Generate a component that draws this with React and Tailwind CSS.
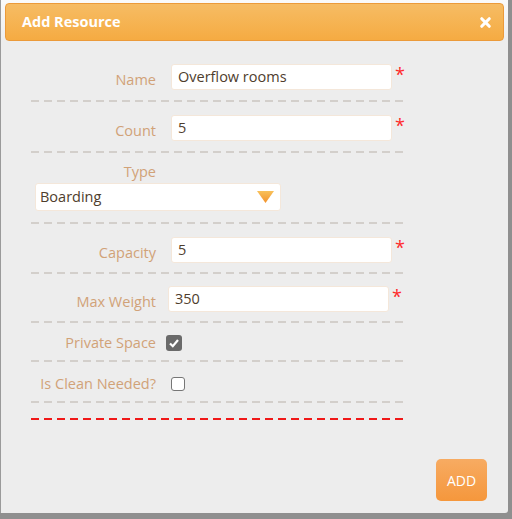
import { X } from 'lucide-react'

const font = { fontFamily: '"Open Sans", "Noto Sans", sans-serif' }

function Dash({ red }) {
    return (
        <div
            className={`h-[2px] w-full ${red
                ? 'bg-[repeating-linear-gradient(to_right,#f01818_0_8px,transparent_8px_13px)]'
                : 'bg-[repeating-linear-gradient(to_right,#d3cfcb_0_8px,transparent_8px_13px)]'
                }`}
        />
    )
}

function TextRow({ label, value, shift = false }) {
    return (
        <div className="flex items-start h-[26px]">
            <div className="w-[125px] text-right text-[14.5px] leading-[20px] pt-[6px] text-[#d1a278]">{label}</div>
            <div className={`flex items-start h-[26px] ${shift ? 'ml-[12px]' : 'ml-[15px]'}`}>
                <div className="w-[221px] h-[26px] bg-white border border-[#f4e7da] rounded-[3px] px-[6px] text-[14.5px] leading-[24px] text-[#4e3d2d]">
                    {value}
                </div>
                <div className="h-[26px] leading-none text-[18px] text-[#ff2a2a] ml-[3px] pt-[1px]">*</div>
            </div>
        </div>
    )
}

export default function App() {
    return (
        <div className="w-[512px] h-[519px] bg-[#8f8f8f] overflow-hidden" style={font}>
            <div className="w-[508px] h-[513px] bg-[#ededed] border-l border-[#9a9a9a] rounded-br-[3px] flex flex-col">
                {/* Header */}
                <div className="bg-[linear-gradient(to_bottom,#fafafa,#ededed)] pt-[3px] px-[4px]">
                    <div className="h-[38px] rounded-[4px] border border-[#eb9a3a] bg-[linear-gradient(to_bottom,#f6bc64,#f5ab42)] flex items-center justify-between pl-[16px] pr-[10px]">
                        <span className="text-white font-bold text-[14.5px]">Add Resource</span>
                        <X size={15} strokeWidth={5} className="text-white" />
                    </div>
                </div>

                {/* Form */}
                <div className="mx-[30px] w-[375px] flex flex-col pt-[23px]">
                    <TextRow label="Name" value="Overflow rooms" />
                    <div className="mt-[10px]"><Dash /></div>

                    <div className="mt-[13px]"><TextRow label="Count" value="5" /></div>
                    <div className="mt-[10px]"><Dash /></div>

                    <div className="mt-[9px] w-[125px] text-right text-[14.5px] leading-[20px] text-[#d1a278]">Type</div>
                    <div className="mt-[1px] ml-[4px] w-[246px] h-[28px] bg-white border border-[#f4e7da] rounded-[3px] pl-[4px] pr-[6px] flex items-center justify-between">
                        <span className="text-[14.5px] text-[#4e3d2d]">Boarding</span>
                        <svg width="17" height="12" viewBox="0 0 17 12">
                            <defs>
                                <linearGradient id="tri" x1="0" y1="0" x2="0" y2="1">
                                    <stop offset="0" stopColor="#f8c15a" />
                                    <stop offset="1" stopColor="#f2922c" />
                                </linearGradient>
                            </defs>
                            <polygon points="0,0 17,0 8.5,12" fill="url(#tri)" />
                        </svg>
                    </div>
                    <div className="mt-[11px]"><Dash /></div>

                    <div className="mt-[13px]"><TextRow label="Capacity" value="5" /></div>
                    <div className="mt-[9px]"><Dash /></div>

                    <div className="mt-[12px]"><TextRow label="Max Weight" value="350" shift /></div>
                    <div className="mt-[9px]"><Dash /></div>

                    <div className="mt-[11px] flex items-center h-[18px]">
                        <div className="w-[125px] text-right text-[14.5px] leading-[20px] text-[#d1a278]">Private Space</div>
                        <div className="ml-[10px] w-[16px] h-[16px] rounded-[3px] bg-[#6a6a6a] flex items-center justify-center">
                            <svg width="12" height="12" viewBox="0 0 12 12">
                                <path d="M2 6.5 L4.8 9.2 L10 3" fill="none" stroke="white" strokeWidth="2.2" />
                            </svg>
                        </div>
                    </div>
                    <div className="mt-[8px]"><Dash /></div>

                    <div className="mt-[14px] flex items-center h-[16px]">
                        <div className="w-[125px] text-right text-[14.5px] leading-[20px] text-[#d1a278]">Is Clean Needed?</div>
                        <div className="ml-[15px] w-[14px] h-[14px] rounded-[3px] bg-white border border-[#767676]" />
                    </div>
                    <div className="mt-[9px]"><Dash /></div>

                    <div className="mt-[15px]"><Dash red /></div>
                </div>

                {/* Footer */}
                <div className="mt-auto flex justify-end pr-[21px] pb-[12px]">
                    <button className="w-[51px] h-[42px] rounded-[5px] bg-[linear-gradient(to_bottom,#f7ab62,#f5973c)] text-white text-[14px]">
                        ADD
                    </button>
                </div>
            </div>
        </div>
    )
}
